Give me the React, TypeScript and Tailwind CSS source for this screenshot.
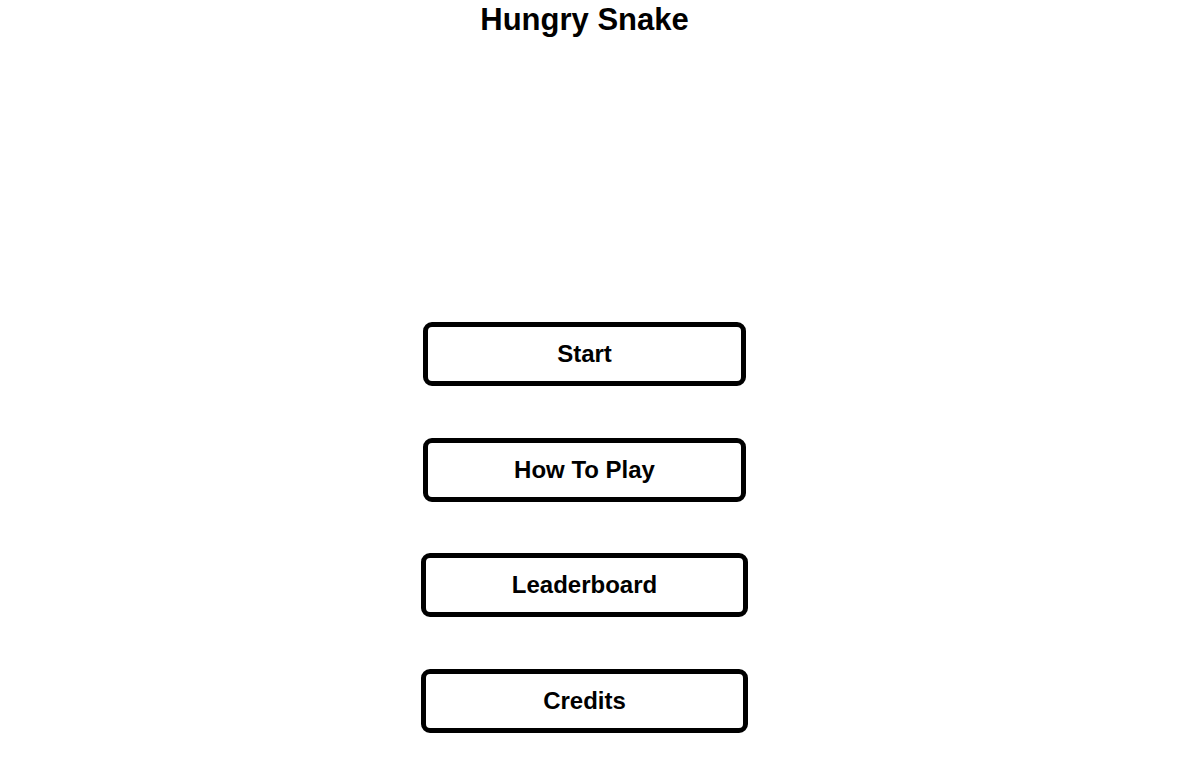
export default function App() {
  const btn =
    "h-[64px] border-[5px] border-black rounded-[9px] bg-white flex items-center justify-center text-[24px] font-bold text-black";
  return (
    <div className="w-[1186px] h-[781px] bg-white flex">
      <div
        className="w-[1169px] flex flex-col items-center"
        style={{ fontFamily: '"Liberation Sans", Arial, sans-serif' }}
      >
        <h1 className="mt-[2px] h-[36px] text-[31px] leading-[36px] font-bold text-black">Hungry Snake</h1>
        <div className="mt-[284px] flex flex-col items-center gap-[51.5px]">
          <button className={`${btn} w-[323px]`}>Start</button>
          <button className={`${btn} w-[323px]`}>How To Play</button>
          <button className={`${btn} w-[327px]`}>Leaderboard</button>
          <button className={`${btn} w-[327px]`}>Credits</button>
        </div>
      </div>
    </div>
  );
}
